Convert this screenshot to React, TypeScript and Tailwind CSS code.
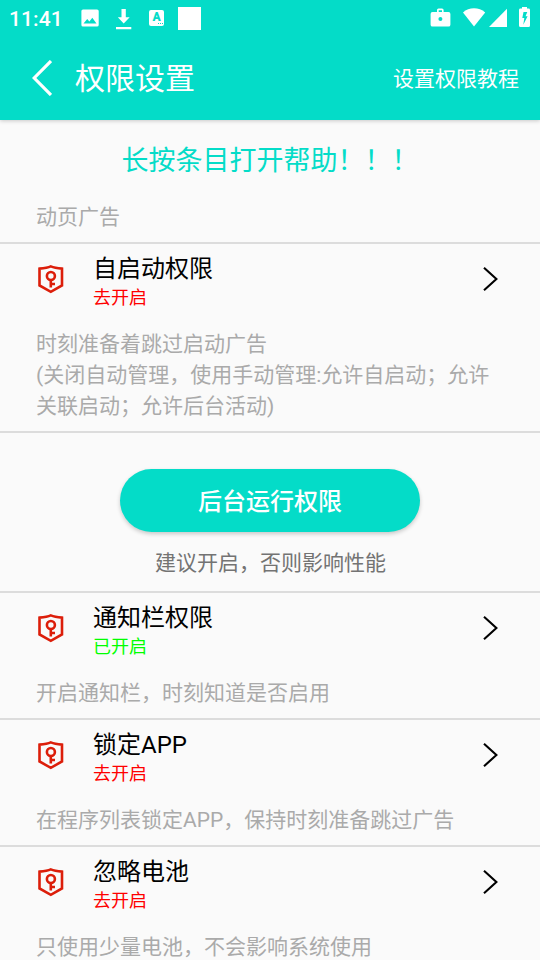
type Permission = {
  title: string;
  enabled: boolean;
  description: string[];
};

const autoStart: Permission = {
  title: "自启动权限",
  enabled: false,
  description: [
    "时刻准备着跳过启动广告",
    "(关闭自动管理，使用手动管理:允许自启动；允许",
    "关联启动；允许后台活动)",
  ],
};

const permissions: Permission[] = [
  {
    title: "通知栏权限",
    enabled: true,
    description: ["开启通知栏，时刻知道是否启用"],
  },
  {
    title: "锁定APP",
    enabled: false,
    description: ["在程序列表锁定APP，保持时刻准备跳过广告"],
  },
  {
    title: "忽略电池",
    enabled: false,
    description: ["只使用少量电池，不会影响系统使用"],
  },
];

function ShieldKeyIcon() {
  return (
    <svg
      className="mb-0.5"
      width="26"
      height="30"
      viewBox="0 0 26 30"
      fill="none"
      stroke="#dc1e0a"
      strokeWidth="2.6"
    >
      <path d="M12.8 2.4 C10 3.7 5.5 4.3 1.5 4.6 V21.5 L12.8 27.8 L24 21.5 V4.6 C20.5 4.3 16 3.7 12.8 2.4Z" />
      <circle cx="12.9" cy="12" r="4" />
      <path d="M12.8 16 V23.6 M13 20 H17" />
    </svg>
  );
}

function StatusBar() {
  return (
    <div className="flex h-9 items-center justify-between">
      <div className="flex items-center text-white">
        <span className="ml-[9px] w-[72px] pt-0.5 text-[21px] leading-none font-medium tracking-[0.1px]">
          11:41
        </span>
        <svg width="18" height="18" viewBox="0 0 18 18">
          <path
            fill="white"
            fillRule="evenodd"
            d="M2 0.5H16Q17.7 0.5 17.7 2V16Q17.7 17.6 16 17.6H2Q0.4 17.6 0.4 16V2Q0.4 0.5 2 0.5ZM2.5 14.5H15.5L11.3 8.8L8.4 12.4L6.2 10Z"
          />
        </svg>
        <svg
          className="mt-px ml-[17px]"
          width="16"
          height="22"
          viewBox="0 0 16 22"
        >
          <path
            fill="white"
            d="M5.5 1H9.8V9.3H13.7L7.7 15.5L1.8 9.3H5.5ZM0 19H15.3V21.2H0Z"
          />
        </svg>
        <div className="ml-[17px] flex h-[16px] w-[15px] flex-col items-center rounded-[2px] bg-white text-[#04dcc8]">
          <span className="pt-0.5 text-[12px] leading-[10px] font-black">
            A
          </span>
          <span className="mt-px ml-[7px] flex gap-px">
            <i className="size-[1px] bg-[#04dcc8]" />
            <i className="size-[1px] bg-[#04dcc8]" />
            <i className="size-[1px] bg-[#04dcc8]" />
          </span>
        </div>
        <div className="ml-[14px] size-[23px] bg-white" />
      </div>
      <svg
        className="mr-2"
        width="104"
        height="24"
        viewBox="428 6 104 24"
        fill="white"
      >
        <path
          fillRule="evenodd"
          d="M437 12V10Q437 8.5 438.5 8.5H442Q443.6 8.5 443.6 10V12H448.5Q450.4 12 450.4 14V24.7Q450.4 26.6 448.5 26.6H432.5Q430.6 26.6 430.6 24.7V14Q430.6 12 432.5 12ZM438.7 12H442V10.2H438.7ZM440.4 17A2 2 0 1 0 440.4 21A2 2 0 1 0 440.4 17Z"
        />
        <path d="M463 12.5C469 6.9 479 6.9 485.2 12.5L474 26.5Z" />
        <path d="M507 8.8V27H489Z" />
        <path
          fillRule="evenodd"
          d="M522 7H527V8.6H528.5Q530 8.6 530 10V25.5Q530 27 528.5 27H520.5Q519 27 519 25.5V10Q519 8.6 520.5 8.6H522ZM523.5 12L522.3 18H524.3L523.3 24.7L527.6 16.3H525.5L527.3 12Z"
        />
      </svg>
    </div>
  );
}

function Header() {
  return (
    <header className="h-[120px] shrink-0 bg-[#04dcc8] text-white shadow-[0_1px_4px_rgba(0,0,0,0.2)]">
      <StatusBar />
      <div className="flex h-[84px] items-center pr-[21px] pl-8">
        <svg width="20" height="36" viewBox="0 0 20 36" fill="none">
          <path d="M19 1L2.2 18L19 35" stroke="white" strokeWidth="3.2" />
        </svg>
        <h1 className="ml-[23px] flex-1 pt-0.5 text-[30px] leading-none">
          权限设置
        </h1>
        <span className="pt-[3px] text-[21px] leading-none">设置权限教程</span>
      </div>
    </header>
  );
}

function PermissionRow({ title, enabled, description }: Permission) {
  return (
    <section className="shrink-0 border-t-2 border-[#dcdcdc] pb-[9px]">
      <div className="flex h-[71px] items-center pr-[42px] pl-[38px]">
        <ShieldKeyIcon />
        <div className="ml-[29px] flex-1 pt-1">
          <div className="text-[24px] leading-[32px] text-black">{title}</div>
          <div
            className={
              enabled
                ? "text-[18px] leading-[26px] text-[#00ff00]"
                : "text-[18px] leading-[26px] text-[#ff0000]"
            }
          >
            {enabled ? "已开启" : "去开启"}
          </div>
        </div>
        <svg
          className="mb-px"
          width="15"
          height="26"
          viewBox="0 0 15 26"
          fill="none"
        >
          <path d="M1 1.8L13.4 13L1 24.2" stroke="black" strokeWidth="2.1" />
        </svg>
      </div>
      <div className="mt-[14px] pl-9 text-[21px] leading-[31px] whitespace-nowrap text-[#aaaaaa]">
        {description.map((line) => (
          <p key={line}>{line}</p>
        ))}
      </div>
    </section>
  );
}

export default function App() {
  return (
    <div className="flex h-[960px] w-[540px] flex-col overflow-hidden bg-[#fafafa] font-[Roboto,'Noto_Sans_CJK_SC',sans-serif]">
      <Header />
      <h2 className="mt-[21px] shrink-0 text-center text-[27px] leading-10 text-[#04dcc8]">
        长按条目打开帮助！！！
      </h2>
      <p className="mt-[21px] mb-[9px] shrink-0 pl-9 text-[21px] leading-[31px] text-[#aaaaaa]">
        动页广告
      </p>
      <PermissionRow {...autoStart} />
      <div className="flex h-[160px] shrink-0 flex-col items-center border-t-2 border-[#dcdcdc] pt-9">
        <button className="h-[63px] w-[300px] rounded-full bg-[#04dcc8] pt-0.5 text-[24px] font-medium text-white shadow-[0_2px_4px_rgba(0,0,0,0.2)]">
          后台运行权限
        </button>
        <p className="mt-4 pl-px text-[21px] leading-[31px] text-[#737373]">
          建议开启，否则影响性能
        </p>
      </div>
      {permissions.map((permission) => (
        <PermissionRow key={permission.title} {...permission} />
      ))}
    </div>
  );
}
